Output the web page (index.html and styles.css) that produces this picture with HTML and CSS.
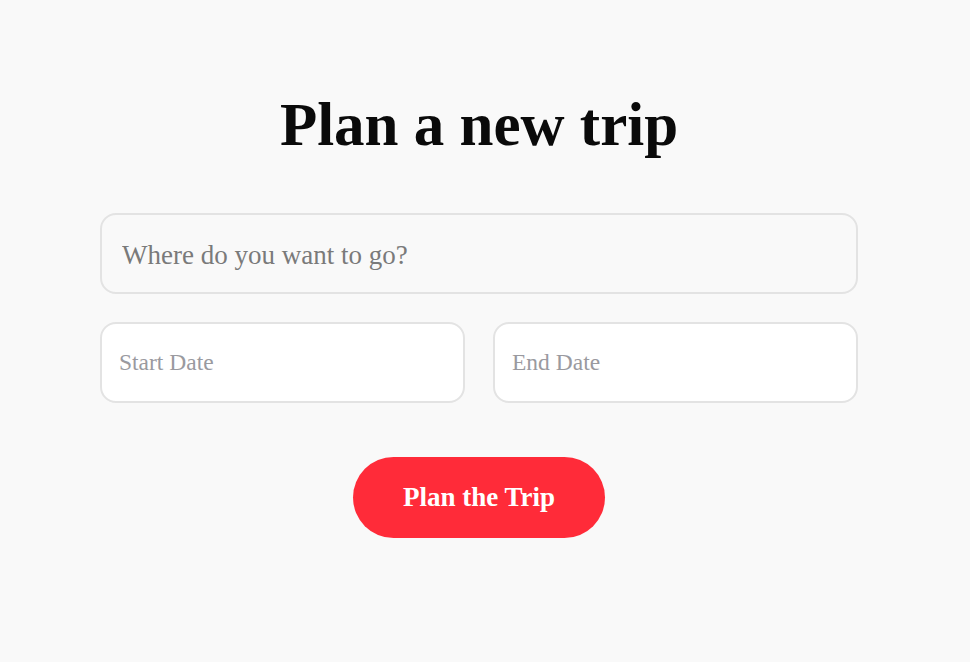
FILE: index.html
```html
<!DOCTYPE html>
<html>
<head>
<meta charset="utf-8">
<link rel="stylesheet" href="styles.css">
</head>
<body>
<main class="page">
  <h1 class="title">Plan a new trip</h1>
  <form class="trip-form">
    <input class="destination" type="text" placeholder="Where do you want to go?">
    <div class="dates">
      <input class="date" type="text" placeholder="Start Date">
      <input class="date" type="text" placeholder="End Date">
    </div>
    <button class="submit" type="button">Plan the Trip</button>
  </form>
</main>
</body>
</html>
```
FILE: styles.css
```css
html, body {
  margin: 0;
  padding: 0;
  background: #f9f9f9;
  font-family: "Liberation Serif", "Times New Roman", serif;
}
.page {
  width: 758px;
  padding: 0 112px 0 100px;
  display: flex;
  flex-direction: column;
  align-items: center;
}
.title {
  margin: 88px 0 0 0;
  font-size: 61px;
  line-height: 74px;
  font-weight: bold;
  color: #0a0a0a;
}
.trip-form {
  width: 100%;
  margin-top: 51px;
  display: flex;
  flex-direction: column;
  align-items: center;
}
input {
  font-family: "Liberation Serif", "Times New Roman", serif;
  box-sizing: border-box;
  outline: none;
}
.destination {
  width: 100%;
  height: 81px;
  border: 2px solid #e3e3e3;
  border-radius: 16px;
  background: #f9f9f9;
  padding: 3px 20px 0;
  font-size: 27px;
  color: #333;
}
.destination::placeholder { color: #7a7a7a; }
.dates {
  width: 100%;
  margin-top: 28px;
  display: flex;
  gap: 28px;
}
.date {
  flex: 1;
  min-width: 0;
  height: 81px;
  border: 2px solid #e3e3e3;
  border-radius: 16px;
  background: #fff;
  padding: 0 17px;
  font-size: 23.5px;
  color: #333;
}
.date::placeholder { color: #9a9a9f; }
.submit {
  margin-top: 54px;
  width: 252px;
  height: 81px;
  border: none;
  border-radius: 41px;
  background: #ff2b39;
  color: #fff;
  font-family: "Liberation Serif", "Times New Roman", serif;
  font-weight: bold;
  font-size: 27px;
}
```
